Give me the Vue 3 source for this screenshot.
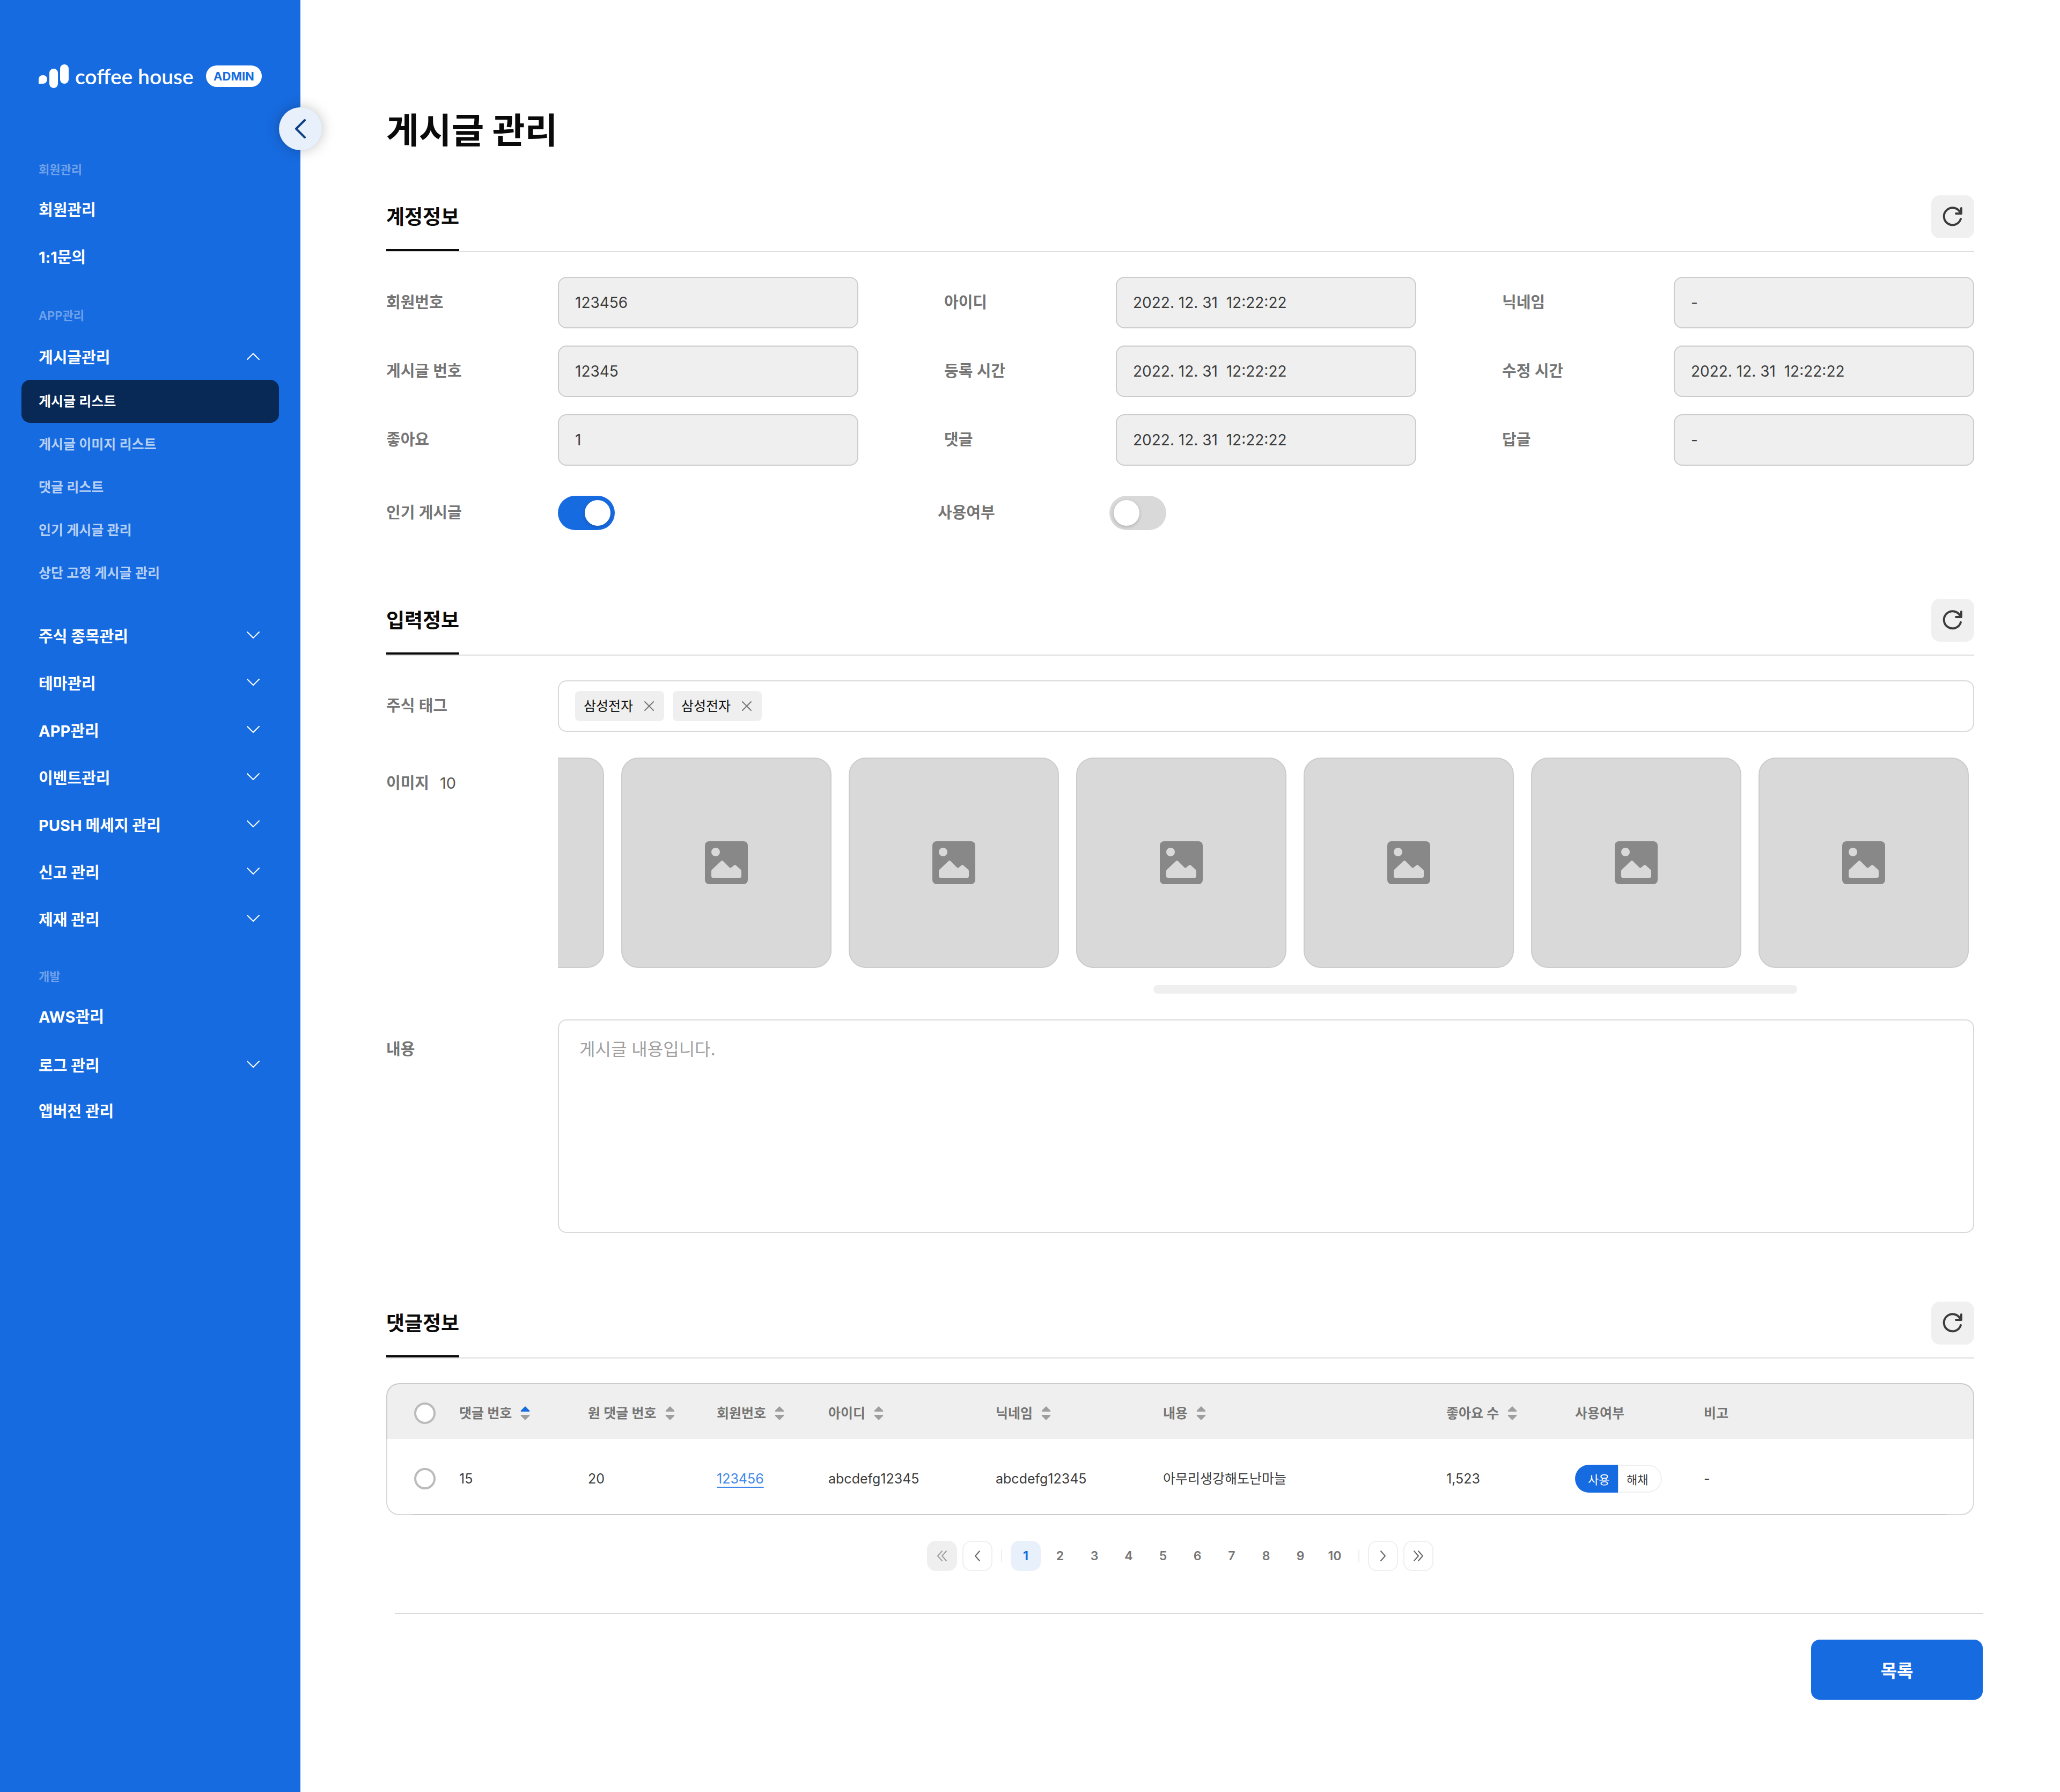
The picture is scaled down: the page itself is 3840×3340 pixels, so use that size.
<script setup>
import { ref } from 'vue'

const menu = [
  { title: '회원관리', items: [{ name: '회원관리' }, { name: '1:1문의' }] },
  {
    title: 'APP관리',
    items: [
      {
        name: '게시글관리',
        fold: true,
        open: true,
        children: ['게시글 리스트', '게시글 이미지 리스트', '댓글 리스트', '인기 게시글 관리', '상단 고정 게시글 관리'],
      },
      { name: '주식 종목관리', fold: true },
      { name: '테마관리', fold: true },
      { name: 'APP관리', fold: true },
      { name: '이벤트관리', fold: true },
      { name: 'PUSH 메세지 관리', fold: true },
      { name: '신고 관리', fold: true },
      { name: '제재 관리', fold: true },
    ],
  },
  { title: '개발', items: [{ name: 'AWS관리' }, { name: '로그 관리', fold: true }, { name: '앱버전 관리' }] },
]
const activeChild = ref('게시글 리스트')

const account = [
  { id: 'member-no', label: '회원번호', value: '123456' },
  { id: 'user-id', label: '아이디', value: '2022. 12. 31  12:22:22' },
  { id: 'nickname', label: '닉네임', value: '-' },
  { id: 'post-no', label: '게시글 번호', value: '12345' },
  { id: 'created', label: '등록 시간', value: '2022. 12. 31  12:22:22' },
  { id: 'updated', label: '수정 시간', value: '2022. 12. 31  12:22:22' },
  { id: 'likes', label: '좋아요', value: '1' },
  { id: 'comments', label: '댓글', value: '2022. 12. 31  12:22:22' },
  { id: 'replies', label: '답글', value: '-' },
]
const popular = ref(true)
const enabled = ref(false)

const tags = ref(['삼성전자', '삼성전자'])
const imageCount = 10
const content = ref('')

const columns = [
  { name: '댓글 번호', sort: 'up' },
  { name: '원 댓글 번호', sort: 'none' },
  { name: '회원번호', sort: 'none' },
  { name: '아이디', sort: 'none' },
  { name: '닉네임', sort: 'none' },
  { name: '내용', sort: 'none' },
  { name: '좋아요 수', sort: 'none' },
  { name: '사용여부' },
  { name: '비고' },
]
const rows = [
  { no: '15', parent: '20', member: '123456', id: 'abcdefg12345', nick: 'abcdefg12345', text: '아무리생강해도난마늘', likes: '1,523', note: '-' },
]
const page = ref(1)
</script>

<template>
  <div class="layout">
    <aside class="sidebar">
      <div class="brand">
        <svg class="brand-mark" viewBox="0 0 56 44" aria-hidden="true">
          <path d="M8 20a8 8 0 0 1 8 8a8 8 0 0 1-8 8H0v-8a8 8 0 0 1 8-8z" />
          <rect x="20" y="8" width="16" height="36" rx="8" />
          <rect x="40" y="0" width="16" height="36" rx="8" />
        </svg>
        <span class="brand-name">coffee house</span>
        <span class="badge">ADMIN</span>
      </div>

      <button class="collapse" type="button" aria-label="메뉴 접기">
        <svg viewBox="0 0 24 40" width="24" height="40"><path d="M20 4L4 20l16 16" /></svg>
      </button>

      <nav class="menu">
        <section v-for="group in menu" :key="group.title" class="group">
          <h2 class="group-title">{{ group.title }}</h2>
          <template v-for="item in group.items" :key="item.name">
            <button v-if="item.fold" type="button" class="item" :aria-expanded="!!item.open">
              {{ item.name }}
              <svg class="fold" :class="{ open: item.open }" viewBox="0 0 28 16" width="28" height="16">
                <path d="M3 2l11 11L25 2" />
              </svg>
            </button>
            <a v-else href="#" class="item">{{ item.name }}</a>
            <div v-if="item.children" class="children">
              <a
                v-for="child in item.children"
                :key="child"
                href="#"
                class="child"
                :class="{ active: child === activeChild }"
              >{{ child }}</a>
            </div>
          </template>
        </section>
      </nav>
    </aside>

    <main class="main">
      <h1 class="page-title">게시글 관리</h1>

      <section class="section">
        <header class="section-head">
          <h2 class="section-title">계정정보</h2>
          <button class="refresh" type="button" aria-label="새로고침">
            <svg viewBox="0 0 48 48" width="48" height="48">
              <path d="M39 28A16 16 0 1 1 38 16" /><path d="M40 8v10H30" />
            </svg>
          </button>
        </header>
        <div class="fields">
          <div v-for="f in account" :key="f.id" class="field">
            <label :for="f.id" class="label">{{ f.label }}</label>
            <input :id="f.id" class="input" type="text" :value="f.value" readonly />
          </div>
        </div>
        <div class="switches">
          <div class="field">
            <label for="popular" class="label switch-label">인기 게시글</label>
            <input id="popular" v-model="popular" class="switch" type="checkbox" role="switch" />
          </div>
          <div class="field">
            <label for="enabled" class="label switch-label">사용여부</label>
            <input id="enabled" v-model="enabled" class="switch" type="checkbox" role="switch" />
          </div>
        </div>
      </section>

      <section class="section">
        <header class="section-head">
          <h2 class="section-title">입력정보</h2>
          <button class="refresh" type="button" aria-label="새로고침">
            <svg viewBox="0 0 48 48" width="48" height="48">
              <path d="M39 28A16 16 0 1 1 38 16" /><path d="M40 8v10H30" />
            </svg>
          </button>
        </header>
        <div class="rows">
          <div class="field">
            <span class="label">주식 태그</span>
            <div class="tag-box">
              <span v-for="(tag, i) in tags" :key="i" class="tag">
                {{ tag }}
                <button type="button" class="tag-remove" aria-label="태그 삭제" @click="tags.splice(i, 1)">
                  <svg viewBox="0 0 24 24" width="24" height="24"><path d="M4 4l16 16M20 4L4 20" /></svg>
                </button>
              </span>
            </div>
          </div>
          <div class="field">
            <span class="label">이미지<span class="count">{{ imageCount }}</span></span>
            <div class="gallery">
              <div class="tiles">
                <div v-for="n in imageCount" :key="n" class="tile">
                  <svg viewBox="0 0 80 80" width="80" height="80" aria-hidden="true">
                    <rect class="frame" width="80" height="80" rx="8" />
                    <circle class="cut" cx="20" cy="20" r="8" />
                    <path
                      class="cut"
                      d="M12 56q0-2 1-3L30 37q2-2 4 0l12 12q2 1 3 0l5-4q2-2 4 0l9 8q1 1 1 3v9q0 3-3 3H15q-3 0-3-3z"
                    />
                  </svg>
                </div>
              </div>
              <div class="track"><div class="thumb"></div></div>
            </div>
          </div>
          <div class="field">
            <label for="content" class="label content-label">내용</label>
            <textarea id="content" v-model="content" class="textarea" placeholder="게시글 내용입니다."></textarea>
          </div>
        </div>
      </section>

      <section class="section">
        <header class="section-head">
          <h2 class="section-title">댓글정보</h2>
          <button class="refresh" type="button" aria-label="새로고침">
            <svg viewBox="0 0 48 48" width="48" height="48">
              <path d="M39 28A16 16 0 1 1 38 16" /><path d="M40 8v10H30" />
            </svg>
          </button>
        </header>
        <div class="table-wrap">
          <table class="table">
            <colgroup>
              <col class="w-check" />
              <col class="w-number" />
              <col class="w-number" />
              <col class="w-member" />
              <col class="w-name" />
              <col class="w-name" />
              <col class="w-text" />
              <col class="w-number" />
              <col class="w-number" />
              <col />
            </colgroup>
            <thead>
              <tr>
                <th class="check-cell"><input type="checkbox" class="check" aria-label="전체 선택" /></th>
                <th v-for="col in columns" :key="col.name">
                  <button v-if="col.sort" type="button" class="sort">
                    {{ col.name }}
                    <svg viewBox="0 0 18 26" width="18" height="26" :class="{ up: col.sort === 'up' }">
                      <path class="arrow-up" d="M9 0l8 8q1 2-1 2H2q-2 0-1-2z" />
                      <path class="arrow-down" d="M9 26l8-8q1-2-1-2H2q-2 0-1 2z" />
                    </svg>
                  </button>
                  <template v-else>{{ col.name }}</template>
                </th>
              </tr>
            </thead>
            <tbody>
              <tr v-for="row in rows" :key="row.no">
                <td class="check-cell"><input type="checkbox" class="check" aria-label="댓글 선택" /></td>
                <td>{{ row.no }}</td>
                <td>{{ row.parent }}</td>
                <td><a href="#" class="link">{{ row.member }}</a></td>
                <td>{{ row.id }}</td>
                <td>{{ row.nick }}</td>
                <td>{{ row.text }}</td>
                <td>{{ row.likes }}</td>
                <td>
                  <div class="pill">
                    <button type="button" class="pill-on">사용</button>
                    <button type="button" class="pill-off">해채</button>
                  </div>
                </td>
                <td>{{ row.note }}</td>
              </tr>
            </tbody>
          </table>
        </div>

        <nav class="pager" aria-label="페이지">
          <div class="pager-arrows">
            <button type="button" class="arrow" disabled aria-label="처음">
              <svg viewBox="0 0 24 24" width="24" height="24"><path d="M12 3L4 12l8 9M20 3l-8 9 8 9" /></svg>
            </button>
            <button type="button" class="arrow" aria-label="이전">
              <svg viewBox="0 0 24 24" width="24" height="24"><path d="M16 3l-8 9 8 9" /></svg>
            </button>
          </div>
          <span class="bar"></span>
          <div class="pages">
            <button
              v-for="n in 10"
              :key="n"
              type="button"
              class="page"
              :class="{ current: n === page }"
              @click="page = n"
            >{{ n }}</button>
          </div>
          <span class="bar"></span>
          <div class="pager-arrows">
            <button type="button" class="arrow" aria-label="다음">
              <svg viewBox="0 0 24 24" width="24" height="24"><path d="M8 3l8 9-8 9" /></svg>
            </button>
            <button type="button" class="arrow" aria-label="마지막">
              <svg viewBox="0 0 24 24" width="24" height="24"><path d="M4 3l8 9-8 9M12 3l8 9-8 9" /></svg>
            </button>
          </div>
        </nav>
      </section>

      <footer class="footer">
        <button type="button" class="list-button">목록</button>
      </footer>
    </main>
  </div>
</template>

<style>
body {
  background: #fff;
}
</style>

<style scoped>
.layout,
.layout *,
.layout *::before,
.layout *::after {
  box-sizing: border-box;
}
.layout {
  display: flex;
  min-height: 100vh;
  font-family: Inter, "Noto Sans CJK KR", sans-serif;
  font-size: 29px;
  line-height: 40px;
  color: #3c3c3c;
}
button,
input,
textarea {
  font-family: inherit;
  margin: 0;
}
button {
  padding: 0;
  border: 0;
  background: none;
  cursor: pointer;
}
h1,
h2 {
  margin: 0;
}
a {
  text-decoration: none;
}
svg {
  display: block;
  flex: none;
}

/* sidebar */
.sidebar {
  position: relative;
  flex: none;
  width: 560px;
  padding: 120px 40px;
  background: #176be0;
  color: #fff;
}
.brand {
  display: flex;
  align-items: center;
  height: 44px;
  padding: 0 32px;
}
.brand-mark {
  width: 56px;
  height: 44px;
  fill: #fff;
}
.brand-name {
  margin-left: 12px;
  font-family: Lato, sans-serif;
  font-size: 39px;
  font-weight: 600;
}
.badge {
  width: 104px;
  margin-left: auto;
  border-radius: 20px;
  background: #fff;
  color: #176be0;
  font-size: 22px;
  font-weight: 700;
  text-align: center;
}
.collapse {
  position: absolute;
  top: 200px;
  right: -40px;
  display: flex;
  align-items: center;
  justify-content: center;
  width: 80px;
  height: 80px;
  border-radius: 50%;
  background: #e8f0fc;
  box-shadow: 0 0 24px rgba(0, 0, 0, 0.25);
}
.collapse svg {
  fill: none;
  stroke: #0e4086;
  stroke-width: 4;
  stroke-linecap: round;
  stroke-linejoin: round;
}
.menu {
  display: flex;
  flex-direction: column;
  gap: 48px;
  margin-top: 136px;
}
.group-title {
  padding: 0 32px;
  margin-bottom: 16px;
  color: rgba(255, 255, 255, 0.4);
  font-size: 22px;
  font-weight: 600;
  line-height: 32px;
}
.item {
  display: flex;
  align-items: center;
  justify-content: space-between;
  width: 100%;
  height: 88px;
  padding: 0 34px 0 32px;
  color: #fff;
  font-size: 29px;
  font-weight: 700;
}
.fold {
  fill: none;
  stroke: #fff;
  stroke-width: 2;
  stroke-linecap: round;
  stroke-linejoin: round;
}
.fold.open {
  transform: rotate(180deg);
}
.children {
  margin-bottom: 32px;
}
.child {
  display: flex;
  align-items: center;
  height: 80px;
  padding: 0 32px;
  border-radius: 16px;
  color: rgba(255, 255, 255, 0.7);
  font-size: 25px;
  font-weight: 600;
}
.child.active {
  background: #082955;
  color: #fff;
}

/* main */
.main {
  flex: 1;
  min-width: 0;
  padding: 200px 160px 172px;
}
.page-title {
  margin-bottom: 78px;
  color: #0a0a0a;
  font-size: 66px;
  font-weight: 700;
  line-height: 86px;
}
.section + .section {
  margin-top: 128px;
}
.section-head {
  display: flex;
  justify-content: space-between;
  margin-bottom: 46px;
  border-bottom: 2px solid #dedede;
}
.section-title {
  height: 104px;
  border-bottom: 4px solid #0a0a0a;
  color: #0a0a0a;
  font-size: 37px;
  font-weight: 700;
  line-height: 82px;
}
.refresh {
  display: flex;
  align-items: center;
  justify-content: center;
  width: 80px;
  height: 80px;
  border-radius: 16px;
  background: #f0f0f0;
}
.refresh svg {
  fill: none;
  stroke: #3c3c3c;
  stroke-width: 4;
  stroke-linecap: round;
  stroke-linejoin: round;
}
.fields {
  display: grid;
  grid-template-columns: repeat(3, minmax(0, 1fr));
  gap: 32px 160px;
}
.switches {
  display: grid;
  grid-template-columns: repeat(3, minmax(0, 1fr));
  gap: 124px;
  margin-top: 56px;
}
.field {
  display: flex;
}
.label {
  flex: none;
  width: 320px;
  color: #757575;
  font-weight: 600;
  line-height: 96px;
}
.switch-label {
  line-height: 64px;
}
.content-label {
  line-height: 112px;
}
.count {
  margin-left: 20px;
  color: #555;
  font-weight: 400;
}
.input {
  flex: 1;
  min-width: 0;
  height: 96px;
  padding: 0 30px;
  border: 2px solid #ccc;
  border-radius: 16px;
  background: #efefef;
  color: #3c3c3c;
  font-size: 28px;
}
.switch {
  appearance: none;
  width: 106px;
  height: 64px;
  padding: 8px;
  border-radius: 32px;
  background: #d9d9d9;
}
.switch::before {
  content: "";
  display: block;
  width: 48px;
  height: 48px;
  border-radius: 50%;
  background: #fff;
  box-shadow: 0 2px 6px rgba(0, 0, 0, 0.2);
}
.switch:checked {
  background: #176be0;
}
.switch:checked::before {
  margin-left: auto;
}
.rows {
  display: flex;
  flex-direction: column;
  gap: 48px;
}
.tag-box {
  display: flex;
  flex: 1;
  align-items: center;
  gap: 16px;
  height: 96px;
  padding: 0 30px;
  border: 2px solid #d9d9d9;
  border-radius: 16px;
}
.tag {
  display: flex;
  align-items: center;
  justify-content: space-between;
  width: 166px;
  height: 56px;
  padding: 0 16px;
  border-radius: 8px;
  background: #efefef;
  color: #111;
  font-size: 25px;
}
.tag-remove svg {
  fill: none;
  stroke: #757575;
  stroke-width: 2;
  stroke-linecap: round;
}
.gallery {
  flex: 1;
  min-width: 0;
}
.tiles {
  display: flex;
  justify-content: flex-end;
  gap: 32px;
  padding-right: 10px;
  overflow: hidden;
}
.tile {
  display: flex;
  flex: none;
  align-items: center;
  justify-content: center;
  width: 392px;
  height: 392px;
  border: 2px solid #ccc;
  border-radius: 32px;
  background: #d9d9d9;
}
.frame {
  fill: #888;
}
.cut {
  fill: #d9d9d9;
}
.track {
  display: grid;
  grid-template-columns: 1110fr 1200fr 330fr;
  margin-top: 32px;
}
.thumb {
  grid-column: 2;
  height: 16px;
  border-radius: 8px;
  background: #efefef;
}
.textarea {
  flex: 1;
  min-width: 0;
  height: 398px;
  padding: 30px 38px;
  border: 2px solid #d9d9d9;
  border-radius: 16px;
  background: transparent;
  color: #3c3c3c;
  font-size: 32px;
  line-height: 48px;
  resize: none;
}
.textarea::placeholder {
  color: #a0a0a0;
}

/* comments table */
.table-wrap {
  position: relative;
}
.table-wrap::after {
  content: "";
  position: absolute;
  right: 50px;
  bottom: 0;
  left: 48px;
  height: 2px;
  background: #ccc;
}
.table {
  width: 100%;
  table-layout: fixed;
  border-collapse: separate;
  border-spacing: 0;
  font-size: 25px;
}
.w-check {
  width: 136px;
}
.w-number {
  width: 240px;
}
.w-member {
  width: 208px;
}
.w-name {
  width: 312px;
}
.w-text {
  width: 528px;
}
.table th {
  height: 104px;
  padding: 6px 0 0;
  border-top: 2px solid #ccc;
  background: #efefef;
  color: #757575;
  font-weight: 600;
  text-align: left;
}
.table th:first-child {
  border-left: 2px solid #ccc;
  border-top-left-radius: 24px;
}
.table th:last-child {
  border-right: 2px solid #ccc;
  border-top-right-radius: 24px;
}
.table td {
  height: 142px;
  padding: 8px 0 0;
  border-bottom: 2px solid #d9d9d9;
}
.table td:first-child {
  border-left: 2px solid #d9d9d9;
  border-bottom-left-radius: 24px;
}
.table td:last-child {
  border-right: 2px solid #d9d9d9;
  border-bottom-right-radius: 24px;
}
.table .check-cell {
  padding-left: 50px;
}
.check {
  display: block;
  appearance: none;
  width: 40px;
  height: 40px;
  border: 4px solid #bbb;
  border-radius: 50%;
  background: #fff;
}
.sort {
  display: flex;
  align-items: center;
  gap: 16px;
  color: inherit;
  font-size: 25px;
  font-weight: 600;
  line-height: 40px;
}
.arrow-up,
.arrow-down {
  fill: #9e9e9e;
}
.up .arrow-up {
  fill: #176be0;
}
.link {
  color: #3f87ea;
  text-decoration: underline;
  text-decoration-thickness: 2px;
  text-underline-offset: 6px;
}
.pill {
  display: flex;
  width: 162px;
  height: 52px;
  border-radius: 26px;
  overflow: hidden;
}
.pill-on,
.pill-off {
  font-size: 22px;
  text-align: left;
}
.pill-on {
  width: 80px;
  padding-left: 24px;
  background: #176be0;
  color: #fff;
}
.pill-off {
  width: 82px;
  padding-left: 14px;
  border: 2px solid #efefef;
  border-radius: 0 26px 26px 0;
  background: #fff;
  color: #3c3c3c;
}

/* pagination */
.pager {
  display: flex;
  align-items: center;
  justify-content: center;
  gap: 16px;
  margin-top: 48px;
}
.pager-arrows {
  display: flex;
  gap: 10px;
}
.pages {
  display: flex;
  gap: 8px;
}
.arrow,
.page {
  display: flex;
  align-items: center;
  justify-content: center;
  width: 56px;
  height: 56px;
  border-radius: 16px;
}
.arrow {
  border: 2px solid #efefef;
}
.arrow svg {
  fill: none;
  stroke: #666;
  stroke-width: 2;
  stroke-linecap: round;
  stroke-linejoin: round;
}
.arrow:disabled {
  background: #efefef;
}
.arrow:disabled svg {
  stroke: #9e9e9e;
}
.page {
  color: #757575;
  font-size: 23px;
  font-weight: 600;
}
.page.current {
  background: #e8f0fc;
  color: #176be0;
  font-weight: 700;
}
.bar {
  width: 2px;
  height: 24px;
  background: #efefef;
}

/* the footer rule sits slightly right of the content column */
.footer {
  display: flex;
  justify-content: flex-end;
  margin: 78px -16px 0 16px;
  padding-top: 48px;
  border-top: 2px solid #d9d9d9;
}
.list-button {
  width: 320px;
  height: 112px;
  border-radius: 16px;
  background: #176be0;
  color: #fff;
  font-size: 33px;
  font-weight: 700;
}
</style>
